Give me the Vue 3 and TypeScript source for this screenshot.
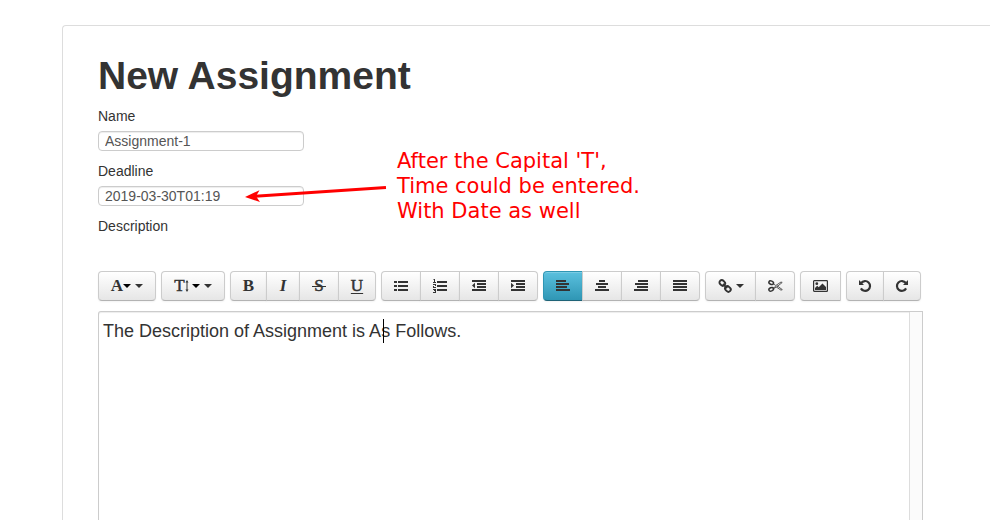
<script setup lang="ts">
import { ref } from 'vue'

interface Tool {
  label: string
  kind: 'glyph' | 'icon'
  glyph?: string
  style?: string
  icon?: string
  menu?: boolean
  active?: boolean
  split?: boolean
}

const name = ref('Assignment-1')
const deadline = ref('2019-03-30T01:19')
const description = ref('The Description of Assignment is As Follows.')

const groups: Tool[][] = [
  [{ label: 'Font', kind: 'glyph', glyph: 'A', style: 'font', menu: true, split: true }],
  [{ label: 'Font size', kind: 'glyph', glyph: 'T', style: 'size', menu: true, split: true }],
  [
    { label: 'Bold', kind: 'glyph', glyph: 'B', style: 'bold' },
    { label: 'Italic', kind: 'glyph', glyph: 'I', style: 'italic' },
    { label: 'Strikethrough', kind: 'glyph', glyph: 'S', style: 'strike' },
    { label: 'Underline', kind: 'glyph', glyph: 'U', style: 'underline' },
  ],
  [
    { label: 'Bullet list', kind: 'icon', icon: 'bullets' },
    { label: 'Number list', kind: 'icon', icon: 'numbers' },
    { label: 'Reduce indent', kind: 'icon', icon: 'outdent' },
    { label: 'Indent', kind: 'icon', icon: 'indent' },
  ],
  [
    { label: 'Align left', kind: 'icon', icon: 'left', active: true },
    { label: 'Center', kind: 'icon', icon: 'center' },
    { label: 'Align right', kind: 'icon', icon: 'right' },
    { label: 'Justify', kind: 'icon', icon: 'justify' },
  ],
  [
    { label: 'Hyperlink', kind: 'icon', icon: 'link', menu: true },
    { label: 'Remove hyperlink', kind: 'icon', icon: 'cut' },
  ],
  [{ label: 'Insert picture', kind: 'icon', icon: 'picture' }],
  [
    { label: 'Undo', kind: 'icon', icon: 'undo' },
    { label: 'Redo', kind: 'icon', icon: 'redo' },
  ],
]

const icons: Record<string, string> = {
  bullets: 'M4 1h10v2H4zM4 5h10v2H4zM4 9h10v2H4zM0 1h3v2H0zM0 5h3v2H0zM0 9h3v2H0z',
  numbers:
    'M4 1h10v2H4zM4 5h10v2H4zM4 9h10v2H4zM1-1h1v3h1v1H0V2h1V0H0zM0 4h3v2H1v1h2v1H0V6h2V5H0zM0 9h3v4H0v-1h2v-1H1v-1H0z',
  outdent: 'M0 0h14v2H0zM5 3h9v2H5zM5 6h9v2H5zM0 9h14v2H0zM3 2.800v5.400L0 5.500z',
  indent: 'M0 0h14v2H0zM5 3h9v2H5zM5 6h9v2H5zM0 9h14v2H0zM0 2.800v5.400L3 5.500z',
  left: 'M0 0h10v2H0zM0 3h13v2H0zM0 6h11v2H0zM0 9h14v2H0z',
  center: 'M4 0h6v2H4zM1 3h12v2H1zM3 6h8v2H3zM0 9h14v2H0z',
  right: 'M4 0h10v2H4zM1 3h13v2H1zM3 6h11v2H3zM0 9h14v2H0z',
  justify: 'M0 0h14v2H0zM0 3h14v2H0zM0 6h14v2H0zM0 9h14v2H0z',
}
</script>

<template>
  <main class="page">
    <form class="card" @submit.prevent>
      <h1>New Assignment</h1>

      <div class="field">
        <label for="name">Name</label>
        <input id="name" v-model="name" type="text" />
      </div>

      <div class="field">
        <label for="deadline">Deadline</label>
        <input id="deadline" v-model="deadline" type="text" />
        <div class="note">
          <svg class="arrow" width="144" height="24" viewBox="0 0 144 24" aria-hidden="true">
            <path d="M10 15.300 141 6.500" fill="none" stroke="#f00" stroke-width="3" />
            <path d="M0 16 14.500 9.200 11 15.300 15 21z" fill="#f00" />
          </svg>
          <p>After the Capital 'T',<br />Time could be entered.<br />With Date as well</p>
        </div>
      </div>

      <label class="caption" for="description">Description</label>

      <div class="toolbar" role="toolbar" aria-label="Formatting">
        <div v-for="(group, g) in groups" :key="g" class="group">
          <button
            v-for="tool in group"
            :key="tool.label"
            type="button"
            :class="['tool', tool.icon, tool.style, { active: tool.active }]"
            :aria-label="tool.label"
          >
            <span v-if="tool.kind === 'glyph'" class="glyph">{{ tool.glyph }}</span>
            <svg v-if="tool.style === 'size'" class="height" width="4" height="12" viewBox="0 0 4 12">
              <path d="M2 0 3.500 2.500h-1v7h1L2 12 .5 9.500h1v-7h-1z" />
            </svg>
            <svg v-if="tool.icon === 'link'" width="14" height="14" viewBox="0 0 14 14">
              <g fill="none" stroke="currentColor" stroke-width="1.900">
                <rect x="1.300" y="1.600" width="6" height="4.600" rx="2.200" transform="rotate(45 4.300 3.900)" />
                <rect x="6.900" y="7.700" width="6" height="4.600" rx="2.200" transform="rotate(45 9.900 10)" />
                <path d="m5 5 4.200 4.200" />
              </g>
            </svg>
            <svg v-else-if="tool.icon === 'cut'" width="15" height="14" viewBox="0 0 15 14">
              <g fill="none" stroke="currentColor">
                <ellipse cx="3.200" cy="3.700" rx="2.400" ry="1.700" stroke-width="1.500" transform="rotate(22 3.200 3.700)" />
                <ellipse cx="3.200" cy="10.300" rx="2.400" ry="1.700" stroke-width="1.500" transform="rotate(-22 3.200 10.300)" />
                <path d="m5.300 4.800 2.500 1.700L13 3l1.200.5L8.600 8l-3.300 1.700M5.300 9l2.500-1.600M8.800 6.600l5.500 4-1.300.6-4.500-3.100" stroke-width=".8" />
              </g>
            </svg>
            <svg v-else-if="tool.icon === 'picture'" width="15" height="12" viewBox="0 0 15 12">
              <rect x=".6" y=".6" width="13.800" height="10.800" rx=".7" fill="none" stroke="currentColor" stroke-width="1.200" />
              <circle cx="3.800" cy="3.700" r="1.400" />
              <path d="M2 10V8l2.200-2.200 1.500 1.500L9.500 3.500 13 7v3z" />
            </svg>
            <svg v-else-if="tool.icon === 'undo' || tool.icon === 'redo'" width="12" height="12" viewBox="0 0 12 12">
              <g :class="{ mirrored: tool.icon === 'redo' }">
                <path d="M2.200 3A4.900 4.900 0 1 1 1.900 8.400" fill="none" stroke="currentColor" stroke-width="2.200" />
                <path d="M0 0V5h5z" />
              </g>
            </svg>
            <svg v-else-if="tool.icon" width="14" height="12" viewBox="0 0 14 12">
              <path :d="icons[tool.icon]" />
            </svg>
            <i v-if="tool.split" class="caret dark"></i>
            <i v-if="tool.menu" class="caret"></i>
          </button>
        </div>
      </div>

      <div class="editor">
        <textarea id="description" v-model="description"></textarea>
        <div class="track"></div>
        <i class="cursor"></i>
      </div>
    </form>
  </main>
</template>

<style>
body {
  margin: 0;
  background: #fff;
}
</style>

<style scoped>
* {
  box-sizing: border-box;
}

.page {
  display: flex;
  height: 100vh;
  padding: 25px 0 0 62px;
  overflow: hidden;
  color: #333;
  font: 14px/20px 'Liberation Sans', Arial, sans-serif;
}

.card {
  display: flex;
  flex: 1;
  flex-direction: column;
  min-width: 0;
  padding: 30px 67px 0 35px;
  border: 1px solid #ddd;
  border-width: 1px 0 0 1px;
  border-radius: 4px 0 0 0;
}

h1 {
  margin: 0 0 10px;
  font-size: 39px;
  line-height: 40px;
}

.field {
  position: relative;
  margin-bottom: 10px;
}

label {
  display: block;
  margin-bottom: 5px;
}

.field input {
  display: block;
  width: 206px;
  height: 20px;
  padding: 0 6px;
  border: 1px solid #ccc;
  border-radius: 4px;
  outline: 0;
  background: #fff;
  box-shadow: inset 0 1px 1px rgba(0, 0, 0, 0.075);
  color: #555;
  font: inherit;
}

.note {
  position: absolute;
  top: -12px;
  left: 147px;
  display: flex;
  gap: 8px;
  color: #f00;
  font: 21px/25px 'DejaVu Sans', sans-serif;
  white-space: nowrap;
  pointer-events: none;
}

.note p {
  margin: 0;
}

.arrow {
  margin-top: 32px;
}

.toolbar {
  display: flex;
  gap: 5px;
  margin: 30px 0 10px;
}

.group {
  display: flex;
}

.tool {
  display: flex;
  align-items: center;
  justify-content: center;
  width: 40px;
  height: 30px;
  padding: 0;
  border: 1px solid #ccc;
  border-bottom-color: #b3b3b3;
  background: linear-gradient(#fff, #e6e6e6);
  box-shadow: inset 0 1px 0 rgba(255, 255, 255, 0.2), 0 1px 2px rgba(0, 0, 0, 0.05);
  color: #333;
}

.tool + .tool {
  margin-left: -1px;
}

.tool:first-child {
  border-top-left-radius: 4px;
  border-bottom-left-radius: 4px;
}

.tool:last-child {
  border-top-right-radius: 4px;
  border-bottom-right-radius: 4px;
}

.tool.active {
  border-color: #2f96b4 #2f96b4 #1f6377;
  background: linear-gradient(#5bc0de, #2f96b4);
}

.tool.font {
  width: 58px;
}

.tool.size {
  width: 64px;
}

.tool.bold {
  width: 37px;
}

.tool.underline,
.tool.undo,
.tool.redo {
  width: 38px;
}

.tool.italic {
  width: 34px;
}

.tool.link {
  width: 51px;
}

.tool.picture {
  width: 41px;
  border-radius: 4px 0 0 4px;
}

.tool svg {
  display: block;
  overflow: visible;
  fill: currentColor;
}

.mirrored {
  transform: translateX(12px) scaleX(-1);
}

.glyph {
  font: bold 17px/20px 'Liberation Serif', serif;
}

.italic .glyph {
  font-style: italic;
}

.strike .glyph {
  position: relative;
  font-weight: normal;
  -webkit-text-stroke: 0.500px currentColor;
}

.strike .glyph::after {
  position: absolute;
  top: 10px;
  right: -2px;
  left: -2px;
  height: 1px;
  background: currentColor;
  content: '';
}

.underline .glyph {
  font-weight: normal;
  text-decoration: underline;
  text-underline-offset: 2px;
  -webkit-text-stroke: 0.500px currentColor;
}

.size .glyph {
  font-weight: normal;
  -webkit-text-stroke: 0.500px currentColor;
}

.size .height {
  margin-right: 3px;
}

.caret {
  margin-left: 4px;
  border: 4px solid transparent;
  border-top-color: #333;
  border-bottom: 0;
}

.caret.dark {
  margin-left: 0;
  border-top-color: #000;
}

.editor {
  position: relative;
  display: flex;
  flex: 1;
  min-height: 200px;
  border: 1px solid #ccc;
  border-bottom: 0;
  border-radius: 3px 0 0 0;
  box-shadow: inset 0 1px 1px rgba(0, 0, 0, 0.075);
}

.editor textarea {
  flex: 1;
  min-width: 0;
  margin: 0;
  padding: 8px 4px;
  border: 0;
  outline: 0;
  background: transparent;
  color: #333;
  font: 18px/22px 'Liberation Sans', Arial, sans-serif;
  resize: none;
}

.track {
  width: 13px;
  border-left: 1px solid #ddd;
  background: #fbfbfb;
}

.cursor {
  position: absolute;
  top: 7px;
  left: 284px;
  width: 1px;
  height: 24px;
  background: #000;
}
</style>
